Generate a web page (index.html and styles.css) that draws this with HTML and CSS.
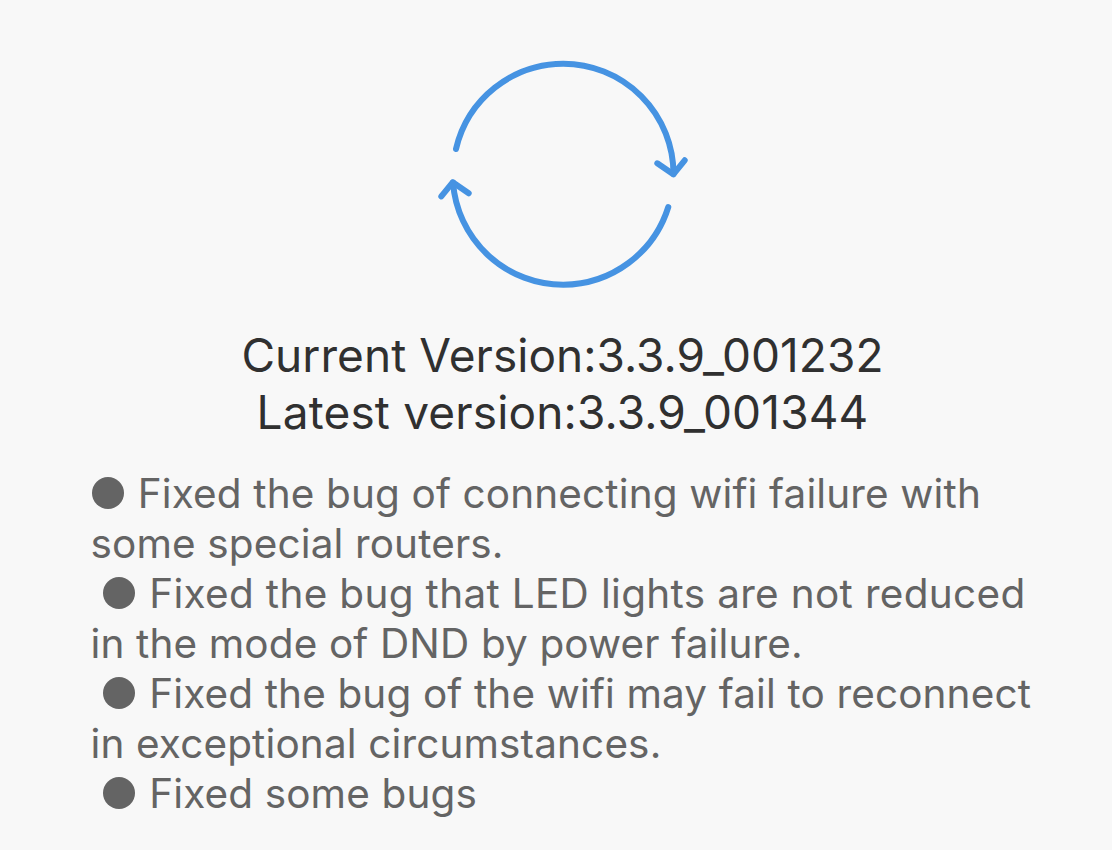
FILE: index.html
```html
<!DOCTYPE html>
<html lang="en">
<head>
    <meta charset="UTF-8">
    <meta name="viewport" content="width=device-width, initial-scale=1.0">
    <title>Firmware Update</title>
    <link rel="stylesheet" href="styles.css">
</head>
<body>
    <div class="update">
        <svg class="update-icon" viewBox="0 0 252 232" fill="none" stroke="#4693e2" stroke-width="6" stroke-linecap="round" stroke-linejoin="round">
            <path d="M19 90A110.500 110.500 0 0 1 126.300 4.700A110.500 110.500 0 0 1 236.500 115"/>
            <path d="M220.300 104.300L236.300 115.300L247.700 101.300"/>
            <path d="M231.300 148A110.500 110.500 0 0 1 126.300 225.700A110.500 110.500 0 0 1 16 123.500"/>
            <path d="M4.300 137.300L15.700 123.300L31.700 134.300"/>
        </svg>

        <div class="versions">
            <p>Current Version:3.3.9_001232</p>
            <p class="latest">Latest version:3.3.9_001344</p>
        </div>

        <div class="notes">
            <p><span class="dot"></span>Fixed the bug of connecting wifi failure with</p>
            <p>some special routers.</p>
            <p class="indent wide"><span class="dot"></span>Fixed the bug that LED lights are not reduced</p>
            <p>in the mode of DND by power failure.</p>
            <p class="indent"><span class="dot"></span>Fixed the bug of the wifi may fail to reconnect</p>
            <p>in exceptional circumstances.</p>
            <p class="indent"><span class="dot"></span>Fixed some bugs</p>
        </div>
    </div>
</body>
</html>
```

FILE: styles.css
```css
body {
    margin: 0;
    background: #f8f8f8;
    font-family: Inter, sans-serif;
}
p {
    margin: 0;
    white-space: nowrap;
}
.update {
    display: flex;
    flex-direction: column;
    height: 850px;
    overflow: hidden;
}
.update-icon {
    flex-shrink: 0;
    width: 252px;
    height: 232px;
    margin: 59px 0 0 437px;
}
.versions {
    margin-top: 36px;
    padding-left: 13px;
    text-align: center;
    font-size: 46px;
    line-height: 57px;
    letter-spacing: 0.05px;
    color: #303030;
}
.latest {
    letter-spacing: 0.16px;
}
.notes {
    margin-top: 28px;
    padding-left: 90.5px;
    font-size: 40.5px;
    line-height: 50px;
    letter-spacing: 0.13px;
    color: #646464;
}
.notes p {
    display: flex;
    align-items: center;
}
.notes .indent {
    padding-left: 11.4px;
}
.notes .wide {
    letter-spacing: 0.32px;
}
.dot {
    width: 32px;
    height: 32px;
    margin: -2px 14px 0 1.3px;
    border-radius: 50%;
    background: #646464;
}
```
